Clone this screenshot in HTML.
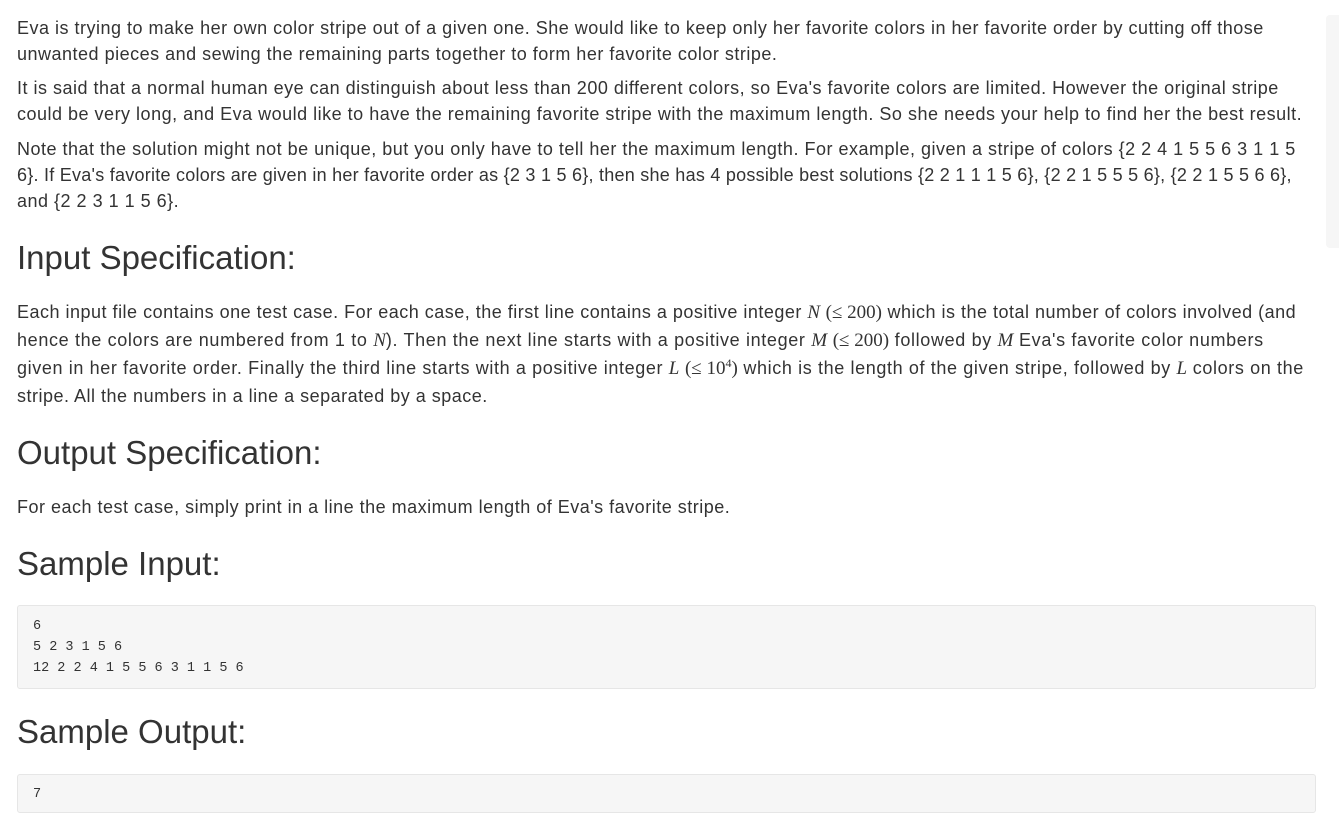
<!DOCTYPE html>
<html><head><meta charset="utf-8"><style>
body{margin:0;background:#fff;color:#333;font-family:"Liberation Sans","Noto Sans CJK SC",sans-serif;font-size:18px;letter-spacing:0.5px;width:1339px;height:829px;overflow:hidden;position:relative}
.l{position:absolute;left:17px;white-space:nowrap;line-height:26px;height:26px}
h2{position:absolute;left:17px;margin:0;font-weight:400;font-size:33px;line-height:40px;white-space:nowrap;letter-spacing:0}
.m{font-family:"Liberation Serif",serif;font-style:italic;font-size:19px;letter-spacing:0}
.r{font-family:"Liberation Serif",serif;font-size:19px;letter-spacing:0}
sup{font-size:12px;line-height:0;vertical-align:7px}
pre{position:absolute;left:17px;width:1299px;margin:0;background:#f6f6f6;border:1px solid #e6e6e6;border-radius:3px;font-family:"Liberation Mono",monospace;font-size:13.5px;letter-spacing:0;line-height:21px;color:#333;padding:0 0 0 15px;box-sizing:border-box}
.sb{position:absolute;left:1326px;top:15px;width:13px;height:233px;background:#f6f6f6;border-radius:4px 0 0 4px}
</style></head><body>
<div class="sb"></div>
<div class="l" style="top:15px">Eva is trying to make her own color stripe out of a given one. She would like to keep only her favorite colors in her favorite order by cutting off those</div>
<div class="l" style="top:41px">unwanted pieces and sewing the remaining parts together to form her favorite color stripe.</div>
<div class="l" style="top:75px">It is said that a normal human eye can distinguish about less than 200 different colors, so Eva's favorite colors are limited. However the original stripe</div>
<div class="l" style="top:101px">could be very long, and Eva would like to have the remaining favorite stripe with the maximum length. So she needs your help to find her the best result.</div>
<div class="l" style="top:136px">Note that the solution might not be unique, but you only have to tell her the maximum length. For example, given a stripe of colors {2 2 4 1 5 5 6 3 1 1 5</div>
<div class="l" style="top:162px;letter-spacing:0.25px">6}. If Eva's favorite colors are given in her favorite order as {2 3 1 5 6}, then she has 4 possible best solutions {2 2 1 1 1 5 6}, {2 2 1 5 5 5 6}, {2 2 1 5 5 6 6},</div>
<div class="l" style="top:188px">and {2 2 3 1 1 5 6}.</div>
<h2 style="top:238px">Input Specification:</h2>
<div class="l" style="top:299px">Each input file contains one test case. For each case, the first line contains a positive integer <span class="m">N</span> <span class="r">(≤ 200)</span> which is the total number of colors involved (and</div>
<div class="l" style="top:327px;letter-spacing:0.65px">hence the colors are numbered from 1 to <span class="m">N</span>). Then the next line starts with a positive integer <span class="m">M</span> <span class="r">(≤ 200)</span> followed by <span class="m">M</span> Eva's favorite color numbers</div>
<div class="l" style="top:355px;letter-spacing:0.62px">given in her favorite order. Finally the third line starts with a positive integer <span class="m">L</span> <span class="r">(≤ 10<sup>4</sup>)</span> which is the length of the given stripe, followed by <span class="m">L</span> colors on the</div>
<div class="l" style="top:383px">stripe. All the numbers in a line a separated by a space.</div>
<h2 style="top:433px">Output Specification:</h2>
<div class="l" style="top:494px">For each test case, simply print in a line the maximum length of Eva's favorite stripe.</div>
<h2 style="top:544px">Sample Input:</h2>
<pre style="top:605px;height:84px;padding-top:10px">6
5 2 3 1 5 6
12 2 2 4 1 5 5 6 3 1 1 5 6</pre>
<h2 style="top:712px">Sample Output:</h2>
<pre style="top:774px;height:39px;padding-top:9px">7</pre>
</body></html>
